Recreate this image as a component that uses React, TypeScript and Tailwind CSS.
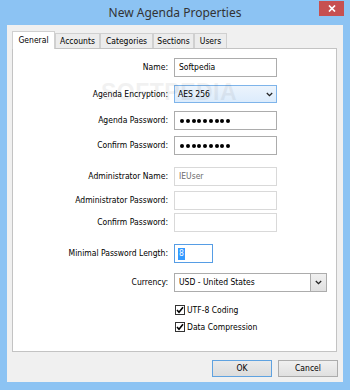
import React from "react";

function Chevron() {
  return (
    <svg width="7" height="5" viewBox="0 0 7 5">
      <path d="M0.8 1 L3.5 3.7 L6.2 1" fill="none" stroke="#222" strokeWidth="1.3" />
    </svg>
  );
}

function Dots() {
  return (
    <div className="flex gap-[1.75px] pl-[5px]">
      {Array.from({ length: 9 }).map((_, i) => (
        <div key={i} className="w-[4px] h-[4px] rounded-full bg-black" />
      ))}
    </div>
  );
}

function Row({ label, mt, children }: { label: string; mt: string; children: React.ReactNode }) {
  return (
    <div className={`flex items-center gap-[6px] ${mt}`}>
      <div className="w-[155px] text-right whitespace-nowrap">{label}</div>
      {children}
    </div>
  );
}

function Check({ label, mt }: { label: string; mt: string }) {
  return (
    <div className={`flex items-center h-[12px] pl-[162px] ${mt}`}>
      <div className="w-[10px] h-[10px] border border-[#333] bg-white flex items-center justify-center">
        <svg width="8" height="8" viewBox="0 0 8 8">
          <path d="M1 4 L3 6.2 L7 1.2" fill="none" stroke="#000" strokeWidth="1.6" />
        </svg>
      </div>
      <span className="ml-[2px] whitespace-nowrap">{label}</span>
    </div>
  );
}

export default function App() {
  return (
    <div className="w-[350px] h-[390px] bg-[#8cc3f3] flex flex-col font-['DejaVu_Sans_Condensed','DejaVu_Sans',sans-serif] text-[8.5px] leading-none text-black overflow-hidden">
      {/* Title bar */}
      <div className="h-[25px] relative flex items-center justify-center shrink-0">
        <span className="font-['Noto_Sans',sans-serif] text-[12px] text-[#333] mt-[1px]">New Agenda Properties</span>
        <div className="absolute right-[6px] top-[1px] w-[25px] h-[15px] bg-[#c75050] flex items-center justify-center">
          <svg width="8" height="7" viewBox="0 0 8 7">
            <path d="M1 0.5 L7 6.5 M7 0.5 L1 6.5" stroke="#fff" strokeWidth="1.7" />
          </svg>
        </div>
      </div>

      {/* Client area */}
      <div className="mx-[7px] h-[357px] bg-[#f0f0f0] border-0 flex flex-col pl-[5px] pt-[6px] shrink-0">
        {/* Tabs */}
        <div className="flex items-end h-[18px] relative z-10 -mb-px">
          <div className="w-[43px] h-[18px] bg-white border-x border-t border-[#d0d0d0] flex items-center justify-center pb-[1px]">
            General
          </div>
          <div className="w-[45px] h-[15px] mb-px bg-[#ececec] border-x border-t border-[#d0d0d0] flex items-center justify-center">
            Accounts
          </div>
          <div className="w-[53px] h-[15px] mb-px bg-[#ececec] border-x border-t border-[#d0d0d0] flex items-center justify-center">
            Categories
          </div>
          <div className="w-[41px] h-[15px] mb-px bg-[#ececec] border-x border-t border-[#d0d0d0] flex items-center justify-center">
            Sections
          </div>
          <div className="w-[33px] h-[15px] mb-px bg-[#ececec] border-x border-t border-[#d0d0d0] flex items-center justify-center">
            Users
          </div>
        </div>

        {/* Panel */}
        <div className="w-[325px] h-[304px] bg-white border border-[#c3c3c3] relative flex flex-col">
          <div className="absolute left-[88px] top-[32px] font-['Liberation_Sans',sans-serif] font-bold text-[23px] text-black opacity-[0.05] tracking-[0.5px] pointer-events-none">
            SOFTPEDIA
          </div>

          <Row label="Name:" mt="mt-[9px]">
            <div className="w-[103px] h-[19px] border border-[#acacac] bg-white flex items-center pl-[4px]">Softpedia</div>
          </Row>

          <Row label="Agenda Encryption:" mt="mt-[8px]">
            <div className="w-[103px] h-[18px] border border-[#7eb4ea] bg-gradient-to-b from-[#ecf4fc] to-[#dcecfc] flex items-center justify-between pl-[3px] pr-[3px]">
              <span>AES 256</span>
              <Chevron />
            </div>
          </Row>

          <Row label="Agenda Password:" mt="mt-[8px]">
            <div className="w-[103px] h-[19px] border border-[#acacac] bg-white flex items-center">
              <Dots />
            </div>
          </Row>

          <Row label="Confirm Password:" mt="mt-[6px]">
            <div className="w-[103px] h-[19px] border border-[#acacac] bg-white flex items-center">
              <Dots />
            </div>
          </Row>

          <Row label="Administrator Name:" mt="mt-[12px]">
            <div className="w-[103px] h-[19px] border border-[#d9d9d9] bg-white flex items-center pl-[4px] text-[#6d6d6d]">IEUser</div>
          </Row>

          <Row label="Administrator Password:" mt="mt-[5px]">
            <div className="w-[103px] h-[19px] border border-[#d9d9d9] bg-white" />
          </Row>

          <Row label="Confirm Password:" mt="mt-[3px]">
            <div className="w-[103px] h-[19px] border border-[#d9d9d9] bg-white" />
          </Row>

          <Row label="Minimal Password Length:" mt="mt-[12px]">
            <div className="w-[39px] h-[19px] border border-[#569de5] bg-white flex items-center pl-[3px]">
              <span className="bg-[#3399ff] text-white h-[12px] px-[1px] flex items-center">8</span>
            </div>
          </Row>

          <Row label="Currency:" mt="mt-[10px]">
            <div className="w-[153px] h-[19px] border border-[#acacac] bg-white flex items-stretch">
              <div className="flex-1 flex items-center pl-[4px]">USD - United States</div>
              <div className="w-[16px] border-l border-[#acacac] bg-gradient-to-b from-[#f0f0f0] to-[#e0e0e0] flex items-center justify-center">
                <Chevron />
              </div>
            </div>
          </Row>

          <Check label="UTF-8 Coding" mt="mt-[12px]" />
          <Check label="Data Compression" mt="mt-[5px]" />
        </div>

        {/* Buttons */}
        <div className="flex justify-end gap-[6px] pr-[5px] mt-[8px]">
          <div className="w-[60px] h-[17px] border border-[#5fa2e0] bg-gradient-to-b from-[#eaeaea] to-[#dcdcdc] flex items-center justify-center">
            OK
          </div>
          <div className="w-[60px] h-[17px] border border-[#acacac] bg-gradient-to-b from-[#f0f0f0] to-[#e0e0e0] flex items-center justify-center">
            Cancel
          </div>
        </div>
      </div>
    </div>
  );
}
